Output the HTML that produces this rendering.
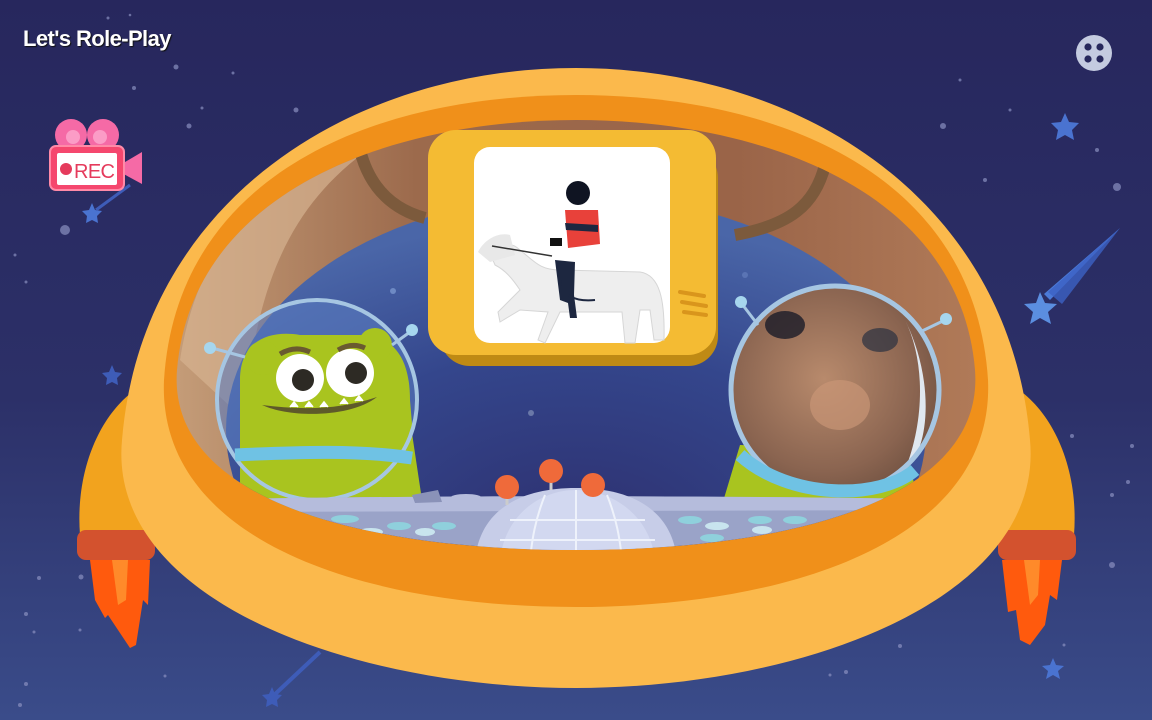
<!DOCTYPE html>
<html><head><meta charset="utf-8"><style>
html,body{margin:0;padding:0;width:1152px;height:720px;overflow:hidden;background:#28295e}
svg{display:block}
.t{position:absolute;left:23px;top:26px;font-family:"Liberation Sans",sans-serif;font-weight:bold;font-size:22px;color:#fff;letter-spacing:-0.6px;text-shadow:1px 1px 1px #111}
</style></head><body>
<svg width="1152" height="720" viewBox="0 0 1152 720">
<defs>
<linearGradient id="bg" x1="0" y1="0" x2="0" y2="1"><stop offset="0" stop-color="#27275d"/><stop offset="0.55" stop-color="#2c3068"/><stop offset="1" stop-color="#3a4c8a"/></linearGradient>
<radialGradient id="win" cx="0.5" cy="0.75" r="0.7"><stop offset="0" stop-color="#2d2f6e"/><stop offset="0.6" stop-color="#34468c"/><stop offset="1" stop-color="#4a66a8"/></radialGradient>
<linearGradient id="wall" x1="0" y1="0" x2="1" y2="0"><stop offset="0" stop-color="#c49c78"/><stop offset="0.3" stop-color="#9c6a4c"/><stop offset="0.7" stop-color="#9a6448"/><stop offset="1" stop-color="#b07a58"/></linearGradient>
<radialGradient id="face" cx="0.45" cy="0.45" r="0.6"><stop offset="0" stop-color="#b88a6c"/><stop offset="0.7" stop-color="#8a6450"/><stop offset="1" stop-color="#6e5040"/></radialGradient>
<clipPath id="cw"><path d="M576 120 C760 120 960 190 975 370 C985 500 790 550 576 550 C362 550 167 500 177 370 C192 190 392 120 576 120Z"/></clipPath>
<clipPath id="ch"><circle cx="835" cy="390" r="104"/></clipPath>
<clipPath id="ca"><circle cx="317" cy="400" r="100"/></clipPath>
</defs>
<rect width="1152" height="720" fill="url(#bg)"/>
<g fill="#8a90c0" opacity="0.7">
<circle cx="108" cy="18" r="1.5"/><circle cx="130" cy="15" r="1.3"/><circle cx="176" cy="67" r="2.5"/><circle cx="134" cy="88" r="2"/><circle cx="233" cy="73" r="1.5"/><circle cx="189" cy="126" r="2.5"/><circle cx="296" cy="110" r="2.5"/><circle cx="202" cy="108" r="1.5"/><circle cx="65" cy="230" r="5"/><circle cx="15" cy="255" r="1.5"/><circle cx="26" cy="282" r="1.5"/><circle cx="39" cy="578" r="2"/><circle cx="81" cy="577" r="2.5"/><circle cx="26" cy="614" r="2"/><circle cx="80" cy="630" r="1.5"/><circle cx="34" cy="632" r="1.5"/><circle cx="26" cy="684" r="2"/><circle cx="20" cy="705" r="2"/><circle cx="165" cy="676" r="1.5"/><circle cx="960" cy="80" r="1.5"/><circle cx="1010" cy="110" r="1.5"/><circle cx="943" cy="126" r="3"/><circle cx="1117" cy="187" r="4"/><circle cx="1097" cy="150" r="2"/><circle cx="1072" cy="436" r="2"/><circle cx="1132" cy="446" r="2"/><circle cx="1128" cy="482" r="2"/><circle cx="1112" cy="495" r="2"/><circle cx="1112" cy="565" r="3"/><circle cx="1064" cy="645" r="1.5"/><circle cx="900" cy="646" r="2"/><circle cx="846" cy="672" r="2"/><circle cx="830" cy="675" r="1.5"/><circle cx="985" cy="180" r="2"/>
</g>
<polygon points="1120,228 1050,300 1044,294" fill="#4b7ad8"/>
<polygon points="1120,228 1062,304 1048,292" fill="#3c62c4" opacity="0.8"/>
<path d="M1040 292 l5 11 12 1 -9 8 3 12 -11 -6 -10 6 3 -12 -9 -8 12 -1z" fill="#5b8ee0"/>
<path d="M1065 113 l4 9 10 1 -7 7 2 10 -9 -5 -9 5 2 -10 -7 -7 10 -1z" fill="#4a73d0"/>
<path d="M1053 658 l3 7 8 1 -6 5 2 8 -7 -4 -7 4 2 -8 -6 -5 8 -1z" fill="#4a73d0"/>
<path d="M112 365 l3 7 7 1 -5 5 1 7 -6 -3 -6 3 1 -7 -5 -5 7 -1z" fill="#3e5cb8"/>
<path d="M92 203 l3 7 7 1 -5 5 1 7 -6 -3 -6 3 1 -7 -5 -5 7 -1z" fill="#4a73d0"/>
<line x1="96" y1="210" x2="130" y2="185" stroke="#3e5cb8" stroke-width="3"/>
<path d="M272 687 l3 7 7 1 -5 5 1 7 -6 -3 -6 3 1 -7 -5 -5 7 -1z" fill="#3e5cb8"/>
<line x1="272" y1="697" x2="320" y2="652" stroke="#3e5cb8" stroke-width="4"/>
<path d="M645 466 l3 7 7 1 -5 5 1 7 -6 -3 -6 3 1 -7 -5 -5 7 -1z" fill="#3e5cb8"/>
<!-- thrusters -->
<path d="M80 535 C75 470 100 415 135 390 L200 390 L165 535 Z" fill="#f2a31e"/>
<path d="M1074 535 C1079 470 1054 415 1019 390 L954 390 L989 535 Z" fill="#f2a31e"/>
<rect x="77" y="530" width="78" height="30" rx="9" fill="#d3522e"/>
<rect x="998" y="530" width="78" height="30" rx="9" fill="#d3522e"/>
<path d="M90 560 L150 560 L148 605 L143 600 L136 645 L130 648 L108 615 L105 618 L95 600 Z" fill="#ff5a0d"/>
<path d="M112 560 L128 560 L126 600 L118 605 Z" fill="#ff8a2a"/>
<path d="M1002 560 L1062 560 L1057 600 L1050 595 L1045 625 L1030 645 L1020 640 L1016 610 L1008 612 Z" fill="#ff5a0d"/>
<path d="M1024 560 L1040 560 L1038 595 L1030 605 Z" fill="#ff8a2a"/>
<!-- body -->
<path d="M576 68 C800 68 1010 200 1030 440 C1045 600 800 688 576 688 C352 688 107 600 122 440 C142 200 352 68 576 68Z" fill="#fbb94c"/>
<path d="M576 95 C780 95 975 175 988 380 C995 540 790 607 576 607 C362 607 157 540 164 380 C177 175 372 95 576 95Z" fill="#f0901a"/>
<path d="M576 120 C760 120 960 190 975 370 C985 500 790 550 576 550 C362 550 167 500 177 370 C192 190 392 120 576 120Z" fill="url(#wall)"/>
<g clip-path="url(#cw)">
<path d="M180 360 C200 230 280 160 390 135 C300 190 255 270 245 420 Z" fill="#d6b290" opacity="0.7"/>
<ellipse cx="576" cy="430" rx="350" ry="235" fill="url(#win)"/>
<path d="M360 150 C370 190 395 210 425 218" stroke="#7c5a3c" stroke-width="12" fill="none"/>
<path d="M825 165 C815 205 790 225 735 235" stroke="#7c5a3c" stroke-width="12" fill="none"/>
<circle cx="393" cy="291" r="3" fill="#6e8ac4"/><circle cx="531" cy="413" r="3" fill="#6a78a8"/><circle cx="885" cy="335" r="3" fill="#5a74b4"/><circle cx="745" cy="275" r="3" fill="#5a74b4"/>
<g clip-path="url(#ca)">
<circle cx="317" cy="400" r="100" fill="#5a7cc0" opacity="0.6"/>
<path d="M240 510 L240 380 C240 340 270 330 300 335 L360 335 C395 335 410 360 410 400 L420 520 Z" fill="#a9c41f"/>
</g>
<path d="M240 520 L240 420 L410 420 L425 520 Z" fill="#a9c41f"/>
<circle cx="263" cy="358" r="17" fill="#a9c41f"/><circle cx="375" cy="345" r="17" fill="#a9c41f"/>
<ellipse cx="300" cy="378" rx="24" ry="24" fill="#fff"/><circle cx="303" cy="380" r="11" fill="#2d2a24"/>
<ellipse cx="350" cy="373" rx="24" ry="24" fill="#fff"/><circle cx="356" cy="373" r="11" fill="#2d2a24"/>
<path d="M280 354 Q295 345 310 352" stroke="#6a5a30" stroke-width="5" fill="none"/><path d="M338 350 Q352 342 365 348" stroke="#6a5a30" stroke-width="5" fill="none"/>
<path d="M262 405 C300 410 340 410 377 397 C350 418 290 418 262 405 Z" fill="#5e5a2a"/>
<path d="M290 407 l4 -5 4 5 M305 407 l4 -5 4 5 M320 407 l4 -5 4 5 M340 404 l4 -5 4 5 M355 401 l4 -5 4 5" fill="#fff" stroke="#fff" stroke-width="1.5"/>
<circle cx="317" cy="400" r="100" fill="none" stroke="#a6c6e2" stroke-width="4"/>
<path d="M235 455 C300 452 360 450 412 458" stroke="#6fc2e4" stroke-width="13" fill="none"/>
<line x1="245" y1="357" x2="212" y2="348" stroke="#a6c6e2" stroke-width="3"/><circle cx="210" cy="348" r="6" fill="#a6d6ee"/>
<line x1="392" y1="345" x2="410" y2="332" stroke="#a6c6e2" stroke-width="3"/><circle cx="412" cy="330" r="6" fill="#a6d6ee"/>
<path d="M722 505 L740 445 L905 450 L920 505 Z" fill="#a9c41f"/>
<g clip-path="url(#ch)">
<rect x="725" y="280" width="220" height="220" fill="url(#face)"/>
<ellipse cx="785" cy="325" rx="20" ry="14" fill="#1a1c28" opacity="0.8"/>
<ellipse cx="880" cy="340" rx="18" ry="12" fill="#2a3040" opacity="0.7"/>
<ellipse cx="840" cy="405" rx="30" ry="25" fill="#c99676" opacity="0.7"/>
<path d="M905 320 C935 380 930 450 905 470 C925 420 925 360 905 320" fill="#e0e8f0"/>
</g>
<circle cx="835" cy="390" r="104" fill="none" stroke="#a6c6e2" stroke-width="5"/>
<path d="M740 455 C790 500 880 500 915 470" stroke="#6fc2e4" stroke-width="13" fill="none"/>
<line x1="758" y1="325" x2="742" y2="304" stroke="#a6c6e2" stroke-width="3"/><circle cx="741" cy="302" r="6" fill="#a6d6ee"/>
<line x1="920" y1="332" x2="945" y2="320" stroke="#a6c6e2" stroke-width="3"/><circle cx="946" cy="319" r="6" fill="#a6d6ee"/>
<path d="M186 500 C400 495 750 495 970 500 L970 600 L186 600 Z" fill="#9aa3c8"/>
<path d="M186 500 C400 495 750 495 970 500 L970 510 L186 512 Z" fill="#b5bcdc"/>
<ellipse cx="345" cy="519" rx="14" ry="4" fill="#8fd0dc"/><ellipse cx="399" cy="526" rx="12" ry="4" fill="#8fd0dc"/><ellipse cx="444" cy="526" rx="12" ry="4" fill="#8fd0dc"/><ellipse cx="371" cy="532" rx="12" ry="4" fill="#c8e4ee"/><ellipse cx="425" cy="532" rx="10" ry="4" fill="#c8e4ee"/>
<ellipse cx="690" cy="520" rx="12" ry="4" fill="#8fd0dc"/><ellipse cx="717" cy="526" rx="12" ry="4" fill="#c8e4ee"/><ellipse cx="760" cy="520" rx="12" ry="4" fill="#8fd0dc"/><ellipse cx="795" cy="520" rx="12" ry="4" fill="#8fd0dc"/><ellipse cx="712" cy="538" rx="12" ry="4" fill="#8fd0dc"/><ellipse cx="762" cy="530" rx="10" ry="4" fill="#c8e4ee"/>
<path d="M412 495 L438 490 L442 502 L415 503 Z" fill="#8a92b8"/><ellipse cx="466" cy="498" rx="16" ry="4" fill="#b5bcdc"/>
<path d="M475 560 C480 510 520 488 576 488 C632 488 672 510 677 560 Z" fill="#c7cde8"/>
<path d="M500 560 C505 515 540 490 576 490 C612 490 650 515 655 560 Z" fill="#d2d8f0"/>
<g stroke="#eef2fb" stroke-width="2" fill="none"><path d="M510 520 L645 520 M500 540 L655 540"/><path d="M576 490 L576 560 M545 495 C535 520 532 540 530 560 M607 495 C617 520 620 540 622 560"/></g>
<line x1="507" y1="490" x2="507" y2="505" stroke="#ccc" stroke-width="3"/><circle cx="507" cy="487" r="12" fill="#ef6a3a"/>
<line x1="551" y1="475" x2="551" y2="490" stroke="#ccc" stroke-width="3"/><circle cx="551" cy="471" r="12" fill="#ef6a3a"/>
<circle cx="593" cy="485" r="12" fill="#ef6a3a"/>
</g>
<!-- monitor -->
<rect x="440" y="148" width="278" height="218" rx="30" fill="#bf8a14"/>
<rect x="428" y="130" width="288" height="225" rx="28" fill="#f4bb33"/>
<rect x="474" y="147" width="196" height="196" rx="16" fill="#fff"/>
<path d="M680 292 l24 4 M682 302 l24 4 M684 312 l22 3" stroke="#d9951c" stroke-width="4" stroke-linecap="round"/>
<path d="M490 253 C500 245 510 240 520 250 C535 262 540 270 560 270 L640 272 C660 275 665 300 664 340 L654 340 L650 310 L640 310 L635 343 L625 343 L622 312 L580 312 L560 312 L545 343 L538 340 L548 312 L520 310 L500 322 L498 312 L510 300 L520 290 C512 278 505 270 495 265 Z" fill="#eeeeee" stroke="#d6d6d6"/>
<path d="M478 252 C485 238 500 232 510 235 L515 255 L490 262 Z" fill="#e8e8e8"/>
<path d="M492 246 L552 256" stroke="#333" stroke-width="1.5"/>
<path d="M555 260 L560 300 L568 303 L570 318 L577 318 L574 295 L575 262 Z" fill="#1d2740"/>
<path d="M560 280 C560 295 575 302 595 300" stroke="#1d2740" stroke-width="2" fill="none"/>
<path d="M565 210 L598 210 L600 244 L568 248 Z" fill="#e8413a"/>
<path d="M565 223 L598 225 L598 232 L566 230 Z" fill="#1d2740"/>
<circle cx="578" cy="193" r="12" fill="#0f1422"/>
<rect x="550" y="238" width="12" height="8" fill="#111"/>
<circle cx="1094" cy="53" r="18" fill="#c4cbe0"/>
<g fill="#27285c"><circle cx="1088" cy="47" r="3.6"/><circle cx="1100" cy="47" r="3.6"/><circle cx="1088" cy="59" r="3.6"/><circle cx="1100" cy="59" r="3.6"/></g>
<circle cx="71" cy="135" r="16" fill="#f56aa6"/><circle cx="103" cy="135" r="16" fill="#f56aa6"/>
<circle cx="73" cy="137" r="7" fill="#fb9cc6"/><circle cx="100" cy="137" r="7" fill="#fb9cc6"/>
<path d="M120 165 L142 152 L142 184 L120 172 Z" fill="#f56aa6"/>
<rect x="50" y="146" width="74" height="44" rx="6" fill="#f5476e" stroke="#ff8aa8" stroke-width="2"/>
<rect x="57" y="153" width="60" height="32" rx="2" fill="#fff"/>
<circle cx="66" cy="169" r="6" fill="#e53b5c"/>
<text x="74" y="178" font-family="Liberation Sans,sans-serif" font-size="20" fill="#e53b5c" textLength="41">REC</text>
</svg>
<div class="t">Let's Role-Play</div>
</body></html>
